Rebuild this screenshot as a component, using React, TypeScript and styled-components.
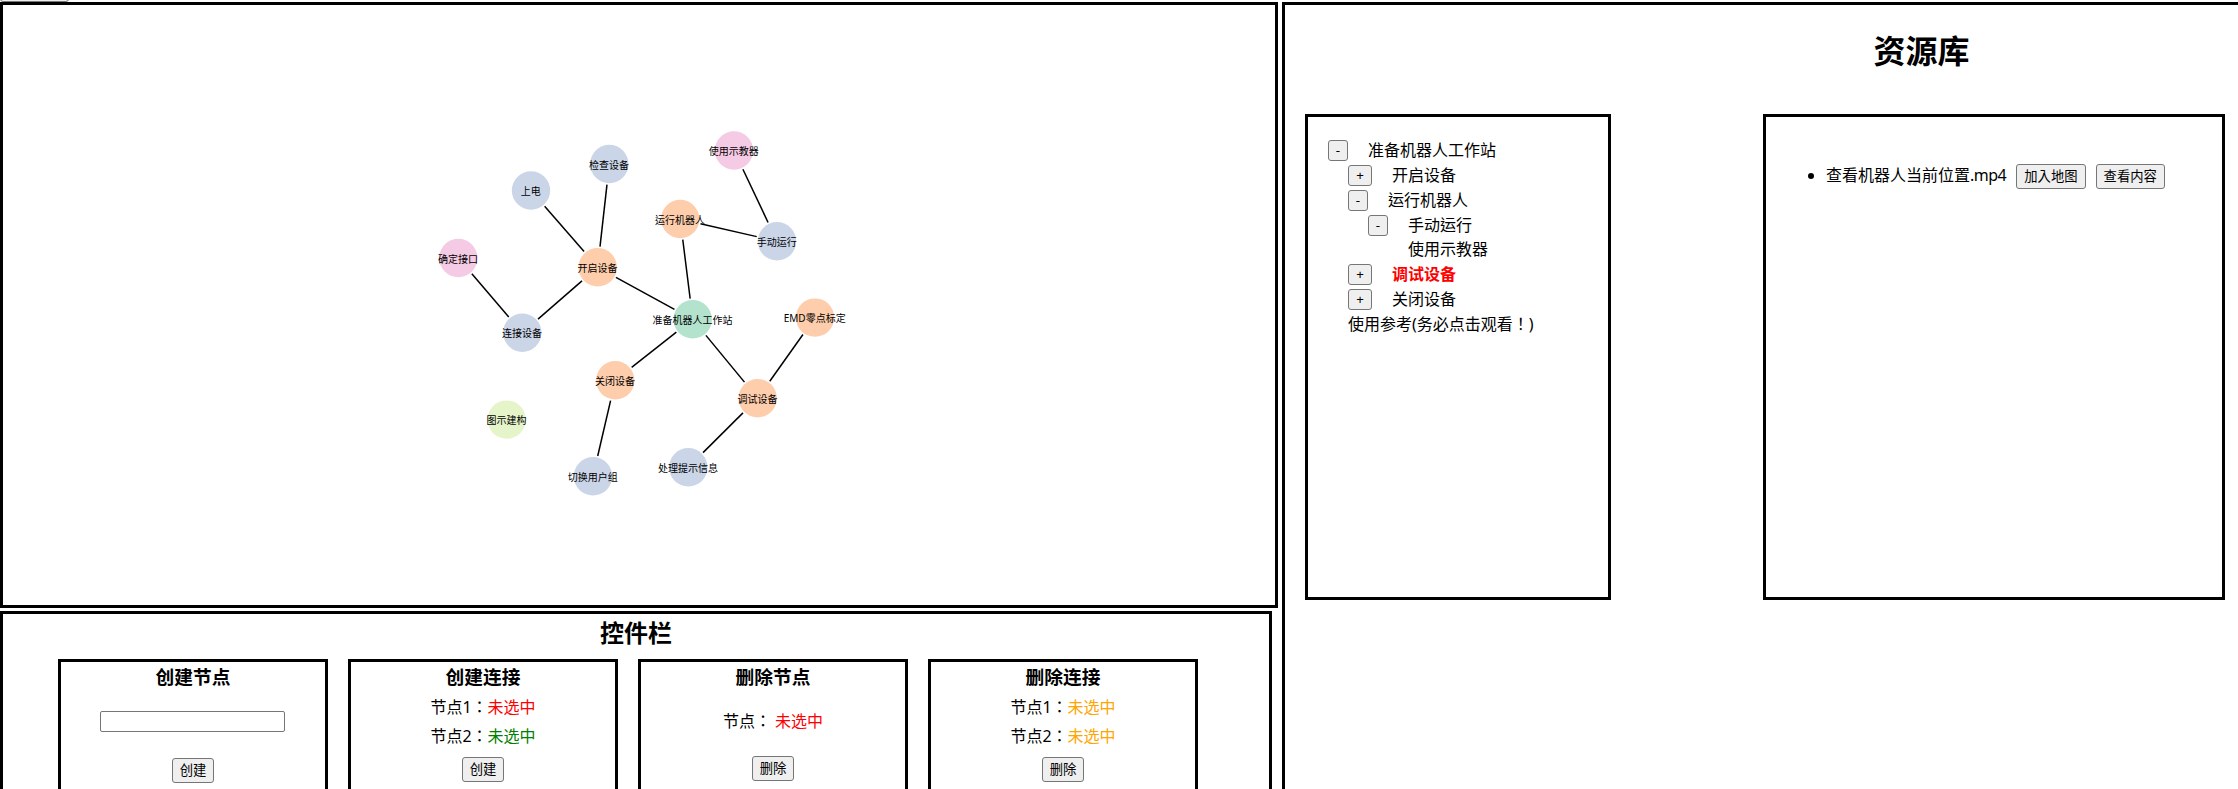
import React from "react";
import styled, { createGlobalStyle } from "styled-components";

const GlobalStyle = createGlobalStyle`
  body {
    margin: 0;
    overflow: hidden;
    background: #fff;
    color: #000;
    font: 16px/24px "Noto Sans", "Noto Sans CJK TC", sans-serif;
  }
`;

const Page = styled.div`
  position: relative;
  display: flex;
  gap: 4px;
  height: 789px;
  box-sizing: border-box;
  padding-top: 2px;
  overflow: hidden;
`;

const LeftColumn = styled.div`
  flex: none;
  display: flex;
  flex-direction: column;
  gap: 3px;
`;

const Panel = styled.section<{ $w: number; $h: number }>`
  flex: none;
  box-sizing: border-box;
  width: ${(p) => p.$w}px;
  height: ${(p) => p.$h}px;
  border: 3px solid #000;
`;

const Button = styled.button`
  box-sizing: border-box;
  height: 25px;
  padding: 0 7px;
  border: 1px solid #767676;
  border-radius: 3px;
  background: #efefef;
  color: #000;
  font: 13.333px/21px "Noto Sans", "Noto Sans CJK TC", sans-serif;
  white-space: nowrap;
`;

const TuckedButton = styled(Button)`
  position: absolute;
  left: 0;
  top: -23px;
  width: 69px;
`;

const Canvas = styled.svg`
  display: block;
  text {
    font-size: 10px;
    text-anchor: middle;
  }
`;

const ControlTitle = styled.h2`
  margin: 0;
  padding-top: 3px;
  height: 42px;
  font-size: 24px;
  line-height: 32px;
  text-align: center;
`;

const Cards = styled.div`
  display: flex;
  gap: 20px;
  padding-left: 55px;
`;

const Card = styled(Panel)`
  display: flex;
  flex-direction: column;
  align-items: center;
`;

const CardTitle = styled.h3`
  margin: 0;
  height: 27px;
  font-size: 18.72px;
  line-height: 29px;
`;

const CardBody = styled.div<{ $h: number; $gap?: number }>`
  display: flex;
  flex-direction: column;
  justify-content: center;
  align-items: center;
  gap: ${(p) => p.$gap ?? 0}px;
  height: ${(p) => p.$h}px;
  margin-bottom: 4px;
`;

const Tint = styled.span<{ $c: string }>`
  color: ${(p) => p.$c};
`;

const TextInput = styled.input`
  box-sizing: border-box;
  width: 185px;
  height: 21px;
  margin-right: 1px;
  border: 1px solid #767676;
  border-radius: 2px;
`;

const LibraryTitle = styled.h1`
  margin: 0;
  height: 109px;
  padding-right: 1px;
  font-size: 32px;
  line-height: 92px;
  text-align: center;
`;

const LibraryBody = styled.div`
  display: flex;
  gap: 152px;
  padding-left: 20px;
`;

const TreePanel = styled(Panel)`
  padding: 20px;
`;

const TreeRow = styled.div<{ $indent: number; $leaf?: boolean; $on?: boolean }>`
  display: flex;
  align-items: center;
  gap: 20px;
  height: ${(p) => (p.$leaf ? 24 : 25)}px;
  padding-left: ${(p) => p.$indent}px;
  color: ${(p) => (p.$on ? "red" : "#000")};
  font-weight: ${(p) => (p.$on ? 700 : 400)};
  white-space: nowrap;
`;

const Toggle = styled(Button)`
  height: 21px;
  padding: 0;
  width: ${(p) => (p.children === "+" ? 24 : 20)}px;
  line-height: 19px;
  position: relative;
  top: 1px;
`;

const FileList = styled.ul`
  margin: 46px 0 0;
  padding-left: 60px;
`;

const Extension = styled.span`
  letter-spacing: -0.5px;
`;

const FileItem = styled.li`
  line-height: 25px;
  white-space: nowrap;
  button {
    margin-left: 10px;
    vertical-align: middle;
  }
`;

type GraphNode = [string, number, number, string];

const GREEN = "#b3e2cd";
const ORANGE = "#fdcdac";
const BLUE = "#cbd5e8";
const PINK = "#f4cae4";
const LIME = "#e6f5c9";

const nodes: GraphNode[] = [
  ["准备机器人工作站", 692.7, 319.3, GREEN],
  ["开启设备", 597.7, 267.3, ORANGE],
  ["运行机器人", 680.2, 219, ORANGE],
  ["调试设备", 757.7, 398.2, ORANGE],
  ["关闭设备", 615.3, 380.3, ORANGE],
  ["EMD零点标定", 815, 317.6, ORANGE],
  ["检查设备", 609.3, 164, BLUE],
  ["上电", 531, 190.5, BLUE],
  ["连接设备", 522.3, 332.7, BLUE],
  ["手动运行", 777, 241.3, BLUE],
  ["切换用户组", 593, 476.3, BLUE],
  ["处理提示信息", 688.3, 467.3, BLUE],
  ["使用示教器", 734, 150.5, PINK],
  ["确定接口", 458.3, 258, PINK],
  ["图示建构", 506.7, 419.6, LIME],
];

const edges = [
  [0, 1], [0, 2], [0, 3], [0, 4], [3, 5], [1, 6], [1, 7],
  [1, 8], [2, 9], [4, 10], [3, 11], [9, 12], [8, 13],
];

function Graph() {
  return (
    <Canvas width="1272" height="600" viewBox="3 5 1272 600">
      {edges.map(([a, b]) => {
        const [, x1, y1] = nodes[a];
        const [, x2, y2] = nodes[b];
        const d = Math.hypot(x2 - x1, y2 - y1);
        const ux = ((x2 - x1) / d) * 20.8;
        const uy = ((y2 - y1) / d) * 20.8;
        return (
          <line key={`${a}-${b}`} x1={x1 + ux} y1={y1 + uy} x2={x2 - ux} y2={y2 - uy} stroke="#000" strokeWidth="1.5" />
        );
      })}
      {nodes.map(([label, x, y, fill]) => (
        <g key={label}>
          <circle cx={x} cy={y} r="19.2" fill={fill} />
          <text x={x - 0.3} y={y + 4.7}>{label}</text>
        </g>
      ))}
    </Canvas>
  );
}

const tree = [
  { sign: "-", label: "准备机器人工作站", indent: 0 },
  { sign: "+", label: "开启设备", indent: 20 },
  { sign: "-", label: "运行机器人", indent: 20 },
  { sign: "-", label: "手动运行", indent: 40 },
  { label: "使用示教器", indent: 80 },
  { sign: "+", label: "调试设备", indent: 20, on: true },
  { sign: "+", label: "关闭设备", indent: 20 },
  { label: "使用参考(务必点击观看！)", indent: 20 },
];

export default function App() {
  return (
    <Page>
      <GlobalStyle />
      <TuckedButton />
      <LeftColumn>
        <Panel $w={1278} $h={606}>
          <Graph />
        </Panel>
        <Panel $w={1272} $h={306}>
          <ControlTitle>控件栏</ControlTitle>
          <Cards>
            <Card $w={270} $h={206}>
              <CardTitle>创建节点</CardTitle>
              <CardBody $h={65}><TextInput /></CardBody>
              <Button>创建</Button>
            </Card>
            <Card $w={270} $h={206}>
              <CardTitle>创建连接</CardTitle>
              <CardBody $h={64} $gap={5}>
                <div>节点1：<Tint $c="red">未选中</Tint></div>
                <div>节点2：<Tint $c="green">未选中</Tint></div>
              </CardBody>
              <Button>创建</Button>
            </Card>
            <Card $w={270} $h={206}>
              <CardTitle>删除节点</CardTitle>
              <CardBody $h={63}>
                <div>节点： <Tint $c="red">未选中</Tint></div>
              </CardBody>
              <Button>删除</Button>
            </Card>
            <Card $w={270} $h={206}>
              <CardTitle>删除连接</CardTitle>
              <CardBody $h={64} $gap={5}>
                <div>节点1：<Tint $c="orange">未选中</Tint></div>
                <div>节点2：<Tint $c="orange">未选中</Tint></div>
              </CardBody>
              <Button>删除</Button>
            </Card>
          </Cards>
        </Panel>
      </LeftColumn>
      <Panel $w={1280} $h={1000}>
        <LibraryTitle>资源库</LibraryTitle>
        <LibraryBody>
          <TreePanel $w={306} $h={486}>
            {tree.map((r) => (
              <TreeRow key={r.label} $indent={r.indent} $leaf={r.label === "使用示教器"} $on={r.on}>
                {r.sign && <Toggle>{r.sign}</Toggle>}
                <span>{r.label}</span>
              </TreeRow>
            ))}
          </TreePanel>
          <Panel $w={462} $h={486}>
            <FileList>
              <FileItem>
                查看机器人当前位置<Extension>.mp4</Extension>
                <Button>加入地图</Button>
                <Button>查看内容</Button>
              </FileItem>
            </FileList>
          </Panel>
        </LibraryBody>
      </Panel>
    </Page>
  );
}
